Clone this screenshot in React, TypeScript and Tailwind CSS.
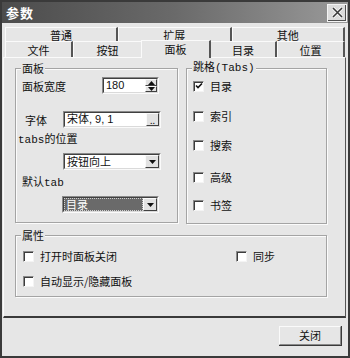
import { ReactNode } from 'react'

const cjk = { fontFamily: '"Noto Sans CJK SC", "Liberation Sans", sans-serif' }
const mono = { fontFamily: '"Liberation Mono", "Noto Sans CJK SC", monospace' }
const latin = { fontFamily: '"Liberation Sans", "Noto Sans CJK SC", sans-serif' }

function Check({ checked = false }: { checked?: boolean }) {
  return (
    <div className="w-[11px] h-[11px] bg-white border-t border-l border-t-[#8a8a8a] border-l-[#8a8a8a] border-b border-r border-b-[#f4f4f4] border-r-[#f4f4f4] shadow-[inset_1px_1px_0_#3c3c3c] flex items-center justify-center shrink-0">
      {checked && (
        <svg width="8" height="8" viewBox="0 0 8 8">
          <path d="M1 3.5 L3 5.5 L7 1.5" stroke="#111" strokeWidth="1.6" fill="none" />
        </svg>
      )}
    </div>
  )
}

function CheckRow({ label, checked, className = '' }: { label: string; checked?: boolean; className?: string }) {
  return (
    <div className={`flex items-center h-[14px] ${className}`}>
      <Check checked={checked} />
      <span className="ml-[6px] text-[11px] leading-[14px] text-[#111]">{label}</span>
    </div>
  )
}

function Group({ title, className = '', children, titleMono }: { title: string; className?: string; children: ReactNode; titleMono?: boolean }) {
  return (
    <div className={`relative border border-[#a4a4a4] shadow-[inset_1px_1px_0_#fbfbfb,1px_1px_0_#fbfbfb] ${className}`}>
      <span
        className="absolute -top-[8px] left-[5px] bg-[#e6e6e6] px-[1px] text-[11px] leading-[14px] text-[#111]"
        style={titleMono ? mono : undefined}
      >
        {title}
      </span>
      {children}
    </div>
  )
}

function Sunken({ className = '', children }: { className?: string; children: ReactNode }) {
  return (
    <div className={`flex border-t border-l border-t-[#8a8a8a] border-l-[#8a8a8a] border-b border-r border-b-[#fafafa] border-r-[#fafafa] ${className}`}>
      <div className="flex flex-1 bg-white border-t border-l border-t-[#404040] border-l-[#404040] border-b border-r border-b-[#dadada] border-r-[#dadada] overflow-hidden">
        {children}
      </div>
    </div>
  )
}

function Raised({ className = '', children }: { className?: string; children: ReactNode }) {
  return (
    <div className={`flex items-center justify-center bg-[#e2e2e2] border-t border-l border-t-[#fafafa] border-l-[#fafafa] border-b border-r border-b-[#404040] border-r-[#404040] ${className}`}>
      {children}
    </div>
  )
}

function Arrow({ up = false }: { up?: boolean }) {
  return (
    <svg width="7" height="4" viewBox="0 0 7 4">
      <path d={up ? 'M0 4 L3.5 0 L7 4 Z' : 'M0 0 L7 0 L3.5 4 Z'} fill="#111" />
    </svg>
  )
}

export default function App() {
  return (
    <div className="w-[350px] h-[358px] border-2 border-[#3a3a3a] bg-[#e6e6e6] flex flex-col text-[#111] overflow-hidden" style={cjk}>
      {/* title */}
      <div className="h-[21px] shrink-0 flex items-center bg-gradient-to-r from-[#4c4c4c] via-[#6a6a6a] to-[#9a9a9a] pl-[4px] pr-[1px]">
        <span className="text-white text-[13px] font-bold leading-none tracking-[1px]">参数</span>
        <div className="ml-auto w-[20px] h-[18px] bg-[#dcdcdc] border border-[#f4f4f4] shadow-[inset_-1px_-1px_0_#505050] flex items-center justify-center">
          <svg width="11" height="11" viewBox="0 0 11 11">
            <path d="M1 1 L10 10 M10 1 L1 10" stroke="#fff" strokeWidth="3" />
            <path d="M1 1 L10 10 M10 1 L1 10" stroke="#3a3a3a" strokeWidth="1.6" />
          </svg>
        </div>
      </div>

      {/* tabs */}
      <div className="mt-[4px] pl-[3px] pr-[3px]">
        <div className="flex h-[14px] text-[11px]">
          {['普通', '扩展', '其他'].map((t, i) => (
            <div
              key={t}
              className={`flex-1 flex items-center justify-center leading-[12px] border-t border-l border-t-[#fafafa] border-l-[#fafafa] border-r-[2px] border-r-[#555] ${i === 0 ? 'max-w-[113px]' : ''} ${i === 1 ? 'max-w-[114px]' : ''}`}
            >
              {t}
            </div>
          ))}
        </div>
        <div className="flex h-[16px] items-end text-[11px] leading-[12px]">
          <div className="w-[68px] h-[16px] flex items-center justify-center border-t border-l border-t-[#fafafa] border-l-[#fafafa] border-r-[2px] border-r-[#555]">文件</div>
          <div className="w-[68px] h-[16px] flex items-center justify-center border-t border-l border-t-[#fafafa] border-l-[#fafafa]">按钮</div>
          <div className="w-[70px] h-[18px] -mb-[1px] relative z-10 bg-[#e6e6e6] flex justify-center pt-[2px] border-t border-l border-t-[#fafafa] border-l-[#fafafa] border-r-[2px] border-r-[#555]">面板</div>
          <div className="w-[66px] h-[16px] flex items-center justify-center border-t border-t-[#fafafa] border-r-[2px] border-r-[#555]">目录</div>
          <div className="flex-1 h-[16px] flex items-center justify-center border-t border-l border-t-[#fafafa] border-l-[#fafafa] border-r-[2px] border-r-[#555]">位置</div>
        </div>
      </div>

      {/* panel */}
      <div className="ml-[1px] w-[343px] h-[261px] shrink-0 border-t border-l border-t-[#fafafa] border-l-[#fafafa] border-r border-r-[#555] border-b-2 border-b-[#3a3a3a] pl-[11px] pt-[10px]">
        <div className="flex gap-[8px]">
          <Group title="面板" className="w-[163px] h-[155px]">
            <div className="mt-[8px] flex items-center">
              <span className="pl-[6px] text-[11px] leading-[14px] w-[86px]">面板宽度</span>
              <Sunken className="w-[57px] h-[17px]">
                <span className="flex-1 pl-[2px] text-[11px] leading-[13px]" style={latin}>180</span>
                <div className="w-[12px] flex flex-col">
                  <Raised className="h-[7px]"><Arrow up /></Raised>
                  <Raised className="h-[6px]"><Arrow /></Raised>
                </div>
              </Sunken>
            </div>
            <div className="mt-[17px] flex items-center">
              <span className="pl-[9px] text-[11px] leading-[14px] w-[47px]">字体</span>
              <Sunken className="w-[98px] h-[17px]">
                <span className="flex-1 pl-[2px] text-[11px] leading-[13px]" style={latin}>宋体, 9, 1</span>
                <Raised className="w-[13px]">
                  <span className="text-[9px] leading-[8px] mt-[3px]">..</span>
                </Raised>
              </Sunken>
            </div>
            <div className="mt-[5px] pl-[2px] text-[11px] leading-[14px]" style={mono}>tabs的位置</div>
            <Sunken className="mt-[6px] ml-[47px] w-[98px] h-[17px]">
              <span className="flex-1 pl-[2px] text-[11px] leading-[13px]">按钮向上</span>
              <Raised className="w-[14px]"><Arrow /></Raised>
            </Sunken>
            <div className="mt-[6px] pl-[6px] text-[11px] leading-[14px]" style={mono}>默认tab</div>
            <Sunken className="mt-[6px] ml-[46px] w-[97px] h-[17px]">
              <div className="flex-1 flex items-center bg-[#6a6a6a] border border-dotted border-[#cfcfcf] text-white pl-[1px] text-[11px] leading-[11px]">目录</div>
              <Raised className="w-[14px]"><Arrow /></Raised>
            </Sunken>
          </Group>

          <Group title="跳格(Tabs)" titleMono className="w-[141px] h-[156px] pl-[6px]">
            <CheckRow label="目录" checked className="mt-[10px]" />
            <CheckRow label="索引" className="mt-[16px]" />
            <CheckRow label="搜索" className="mt-[15px]" />
            <CheckRow label="高级" className="mt-[18px]" />
            <CheckRow label="书签" className="mt-[14px]" />
          </Group>
        </div>

        <Group title="属性" className="mt-[11px] w-[312px] h-[62px] pl-[7px]">
          <div className="mt-[13px] flex">
            <CheckRow label="打开时面板关闭" className="w-[213px]" />
            <CheckRow label="同步" />
          </div>
          <CheckRow label="自动显示/隐藏面板" className="mt-[11px]" />
        </Group>
      </div>

      {/* footer */}
      <div className="flex justify-end pr-[6px] pt-[8px]">
        <div className="w-[63px] h-[20px] border-b border-r border-b-[#3a3a3a] border-r-[#3a3a3a]">
          <div className="w-full h-full bg-[#e6e6e6] border-t border-l border-t-[#fafafa] border-l-[#fafafa] border-b border-r border-b-[#8a8a8a] border-r-[#8a8a8a] flex items-center justify-center text-[11px] leading-none">
            关闭
          </div>
        </div>
      </div>
    </div>
  )
}
